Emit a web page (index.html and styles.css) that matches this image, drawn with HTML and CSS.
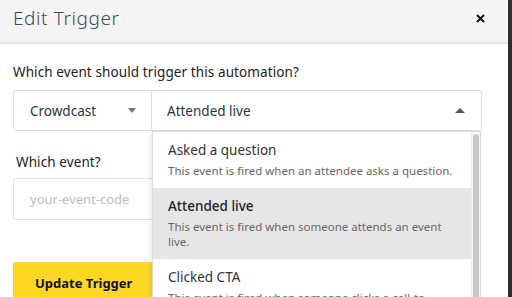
FILE: index.html
```html
<!DOCTYPE html>
<html>
    <head lang="en">
        <meta charset="UTF-8">
        <title>Edit Trigger</title>
        <link rel="stylesheet" href="styles.css">
    </head>
    <body>
        <div id="modal">
            <div class="modal-head">
                <h1>Edit Trigger</h1>
                <span class="close">
                    <svg width="9" height="9" viewBox="0 0 9 9"><path d="M1 1L8 8M8 1L1 8" stroke="#111" stroke-width="2"/></svg>
                </span>
            </div>
            <div class="modal-body">
                <p class="label">Which event should trigger this automation?</p>
                <div class="select-row">
                    <div class="select provider">
                        <span>Crowdcast</span>
                        <i class="caret down"></i>
                    </div>
                    <div class="select event">
                        <span>Attended live</span>
                        <i class="caret up"></i>
                    </div>
                    <div class="menu">
                        <ul>
                            <li>
                                <b>Asked a question</b>
                                <p>This event is fired when an attendee asks a question.</p>
                            </li>
                            <li class="selected">
                                <b>Attended live</b>
                                <p>This event is fired when someone attends an event live.</p>
                            </li>
                            <li>
                                <b>Clicked CTA</b>
                                <p>This event is fired when someone clicks a call-to-action.</p>
                            </li>
                        </ul>
                        <div class="scroll"><span></span></div>
                    </div>
                </div>
                <p class="label sub">Which event?</p>
                <input type="text" placeholder="your-event-code">
                <button class="submit">Update Trigger</button>
            </div>
        </div>
        <div id="edge"></div>
    </body>
</html>
```

FILE: styles.css
```css
*{
    margin:0;
    padding:0;
    box-sizing:border-box;
}
ul,ol{
    list-style:none;
}
body{
    display:flex;
    height:297px;
    overflow:hidden;
    font-family:"Noto Sans", "Open Sans", sans-serif;
    background:#fff;
}
#modal{
    width:508px;
    height:297px;
    overflow:hidden;
}
#edge{
    width:4px;
    background:#2e2e2e;
}
.modal-head{
    display:flex;
    justify-content:space-between;
    align-items:center;
    height:44px;
    padding:0 23px 6px 13px;
    background:#f4f4f4;
    border-bottom:2px solid #e6e6e6;
}
.modal-head h1{
    font-size:19px;
    font-weight:300;
    line-height:24px;
    letter-spacing:0.6px;
    color:#3c4b57;
}
.close{
    display:flex;
}
.modal-body{
    padding:20px 26px 0 13px;
}
.label{
    font-size:13.5px;
    line-height:16px;
    letter-spacing:0.1px;
    color:#222;
}
.label.sub{
    margin:23px 0 8px 3px;
}
.select-row{
    position:relative;
    display:flex;
    height:41px;
    margin-top:10px;
    border:1px solid #dcdcdc;
    border-radius:3px;
}
.select{
    display:flex;
    align-items:center;
    justify-content:space-between;
    font-size:13.5px;
    color:#1f3545;
}
.provider{
    width:138px;
    padding:0 15px 0 16px;
    border-right:1px solid #dcdcdc;
}
.event{
    flex:1;
    padding:0 16px 0 15px;
}
.caret{
    width:0;
    height:0;
    border-left:4px solid transparent;
    border-right:4px solid transparent;
}
.caret.down{
    border-top:5px solid #777;
}
.caret.up{
    border-left-width:5px;
    border-right-width:5px;
    border-bottom:5px solid #555;
}
.menu{
    position:absolute;
    top:40px;
    left:138px;
    right:0;
    height:180px;
    display:flex;
    background:#fff;
    border:1px solid #dcdcdc;
    box-shadow:-2px 2px 4px rgba(0,0,0,0.08);
}
.menu ul{
    flex:1;
}
.menu li{
    padding:8px 10px 10px 15px;
    color:#333;
}
.menu li b{
    display:block;
    font-size:13.5px;
    font-weight:400;
    line-height:20px;
}
.menu li p{
    margin-top:3px;
    font-size:11.5px;
    line-height:15px;
    color:#666;
}
.menu li.selected{
    background:#e6e6e6;
}
.menu li.selected b{
    font-weight:500;
    color:#222;
}
.scroll{
    width:9px;
    padding:2px 1px;
    background:#f7f7f7;
    border-left:1px solid #ececec;
}
.scroll span{
    display:block;
    height:170px;
    background:#c8c8c8;
    border-radius:3px;
}
input{
    display:block;
    width:200px;
    height:42px;
    padding:0 16px;
    font-family:inherit;
    font-size:13px;
    border:1px solid #e3e3e3;
    border-radius:3px;
    outline:none;
}
input::placeholder{
    color:#bdbdbd;
}
.submit{
    display:block;
    margin-top:42px;
    height:42px;
    padding:0 22px;
    font-family:inherit;
    font-size:13px;
    font-weight:700;
    color:#111;
    background:#fdd823;
    border:none;
    border-radius:3px;
}
```
